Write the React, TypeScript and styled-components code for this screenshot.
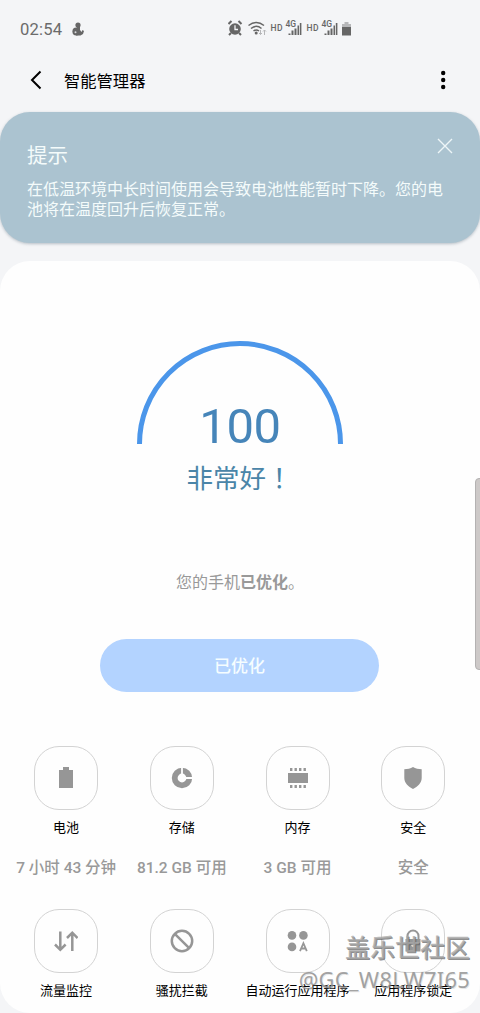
import React from 'react';
import styled, { createGlobalStyle } from 'styled-components';

const GlobalStyle = createGlobalStyle`
  * { box-sizing: border-box; }
  body {
    margin: 0;
    background: #f4f5f7;
    font-family: Roboto, "Noto Sans CJK SC", sans-serif;
    overflow: hidden;
  }
`;

const Screen = styled.main`
  position: relative;
  width: 480px;
  height: 1013px;
  display: flex;
  flex-direction: column;
  background: #f4f5f7;
  overflow: hidden;
`;

const StatusBar = styled.div`
  height: 58px;
  padding: 0 128px 0 20px;
  display: flex;
  align-items: center;
  color: #6b6b6b;
`;

const Clock = styled.span`
  font-size: 16.6px;
  line-height: 20px;
  width: 52px;
  padding-top: 2px;
  letter-spacing: 0.2px;
`;

const StatusIcons = styled.div`
  margin-left: auto;
  display: flex;
  align-items: center;
`;

const TopBar = styled.header`
  height: 54px;
  flex: none;
  padding: 0 30px 10px 28px;
  display: flex;
  align-items: center;
`;

const PageTitle = styled.h1`
  margin: 3px auto 0 20px;
  font-size: 16.3px;
  line-height: 24px;
  font-weight: 400;
  color: #000;
`;

const TipCard = styled.section`
  height: 131px;
  flex: none;
  padding: 32px 27px 0;
  border-radius: 30px;
  background: #abc3d0;
  box-shadow: 0 1px 3px rgba(90, 110, 125, 0.4);
  color: #f4fbfb;
`;

const TipHead = styled.div`
  display: flex;
  justify-content: space-between;
  height: 36px;
`;

const TipTitle = styled.h2`
  margin: 0;
  font-size: 20.5px;
  line-height: 24px;
  font-weight: 400;
`;

const CloseIcon = styled.svg`
  margin: -6px 0 0;
`;

const TipText = styled.p`
  margin: 0;
  width: 420px;
  font-size: 16px;
  line-height: 20px;
`;

const MainCard = styled.section`
  height: 752px;
  flex: none;
  margin-top: 18px;
  padding-top: 79px;
  display: flex;
  flex-direction: column;
  align-items: center;
  border-radius: 30px;
  background: #fefefe;
`;

const Gauge = styled.div`
  display: grid;
  justify-items: center;
  width: 208px;
  height: 105px;
  > * { grid-area: 1 / 1; }
`;

const Score = styled.div`
  align-self: end;
  font-size: 49px;
  line-height: 49px;
  height: 43px;
  letter-spacing: -0.3px;
  color: #4685b9;
`;

const Verdict = styled.div`
  height: 38px;
  flex: none;
  margin: 13px 1px 0 0;
  font-size: 26.5px;
  line-height: 38px;
  color: #4a85a8;
`;

const CenteredMark = styled.span`
  font-family: "Noto Sans CJK TC", sans-serif;
`;

const Summary = styled.p`
  margin: 75px 0 0;
  font-size: 16px;
  line-height: 24px;
  color: #999;
  b { font-weight: 700; }
`;

const OptimizeButton = styled.button`
  width: 279px;
  height: 53px;
  flex: none;
  margin: 44px 1px 0 0;
  padding: 1px 0 0;
  border: 0;
  border-radius: 27px;
  background: #b3d3ff;
  color: #f5fdff;
  font: 500 17px/52px Roboto, "Noto Sans CJK SC", sans-serif;
`;

const Tools = styled.div`
  display: grid;
  grid-template-columns: repeat(4, 115.7px);
  grid-template-rows: 163px 104px;
  margin: 54px 0.7px 0 0;
`;

const Tool = styled.div`
  display: flex;
  flex-direction: column;
  align-items: center;
  white-space: nowrap;
`;

const Tile = styled.div`
  width: 64px;
  height: 64px;
  flex: none;
  display: flex;
  align-items: center;
  justify-content: center;
  border: 1px solid #d3d3d3;
  border-radius: 25px;
  color: #969696;
`;

const ToolName = styled.span`
  margin-top: 7.5px;
  font-size: 13px;
  line-height: 20px;
  color: #000;
`;

const ToolValue = styled.span`
  margin-top: 19.5px;
  font-size: 15.5px;
  line-height: 22px;
  font-weight: 500;
  color: #999;
`;

const EdgeHandle = styled.div`
  position: absolute;
  top: 478px;
  right: -4px;
  width: 9px;
  height: 192px;
  border: 1px solid #b4b2b2;
  border-radius: 4px;
  background: #cdc9c8;
`;

const Watermark = styled.div`
  position: absolute;
  right: 10px;
  top: 932px;
  display: flex;
  flex-direction: column;
  align-items: flex-end;
  white-space: nowrap;
`;

const Community = styled.span`
  font-size: 25px;
  line-height: 34px;
  font-weight: 500;
  color: rgba(170, 170, 170, 0.8);
  text-shadow: 1px 1px 0 rgba(90, 90, 90, 0.7);
`;

const Handle = styled.span`
  margin-top: -1px;
  font: 400 21.8px/30px "Noto Sans", sans-serif;
  letter-spacing: 0.3px;
  color: rgba(140, 140, 140, 0.8);
  text-shadow: 1px 1px 0 rgba(160, 160, 160, 0.25);
`;

const icons = {
  battery: <path d="M9 1h6v3h4v18H5V4h4z" />,
  storage: (
    <g fill="none">
      <circle cx="12" cy="12" r="7.300" stroke="currentColor" strokeWidth="5.800" />
      <path d="M12 0v8M16 12h8" stroke="#fefefe" strokeWidth="1.800" />
    </g>
  ),
  memory: (
    <path d="M2 7h20v10H2zM4 2h2.400v3H4zM8.500 2h2.400v3H8.500zM13 2h2.400v3H13zM17.500 2h2.400v3h-2.400zM4 19h2.400v3H4zM8.500 19h2.400v3H8.500zM13 19h2.400v3H13zM17.500 19h2.400v3h-2.400z" />
  ),
  shield: <path d="M12 1c2.500 1.500 5.500 2.200 8.700 2.300V12c0 5-4 8.500-8.700 11-4.700-2.500-8.700-6-8.700-11V3.300C6.500 3.200 9.500 2.500 12 1z" />,
  traffic: (
    <path d="M6.300 2.500v18M1 15.500l5.300 5.300 5.300-5.300M18.300 22v-18M13 9l5.300-5.300L23.600 9" fill="none" stroke="currentColor" strokeWidth="2.500" />
  ),
  block: (
    <g fill="none" stroke="currentColor" strokeWidth="2.500">
      <circle cx="12" cy="12" r="10.200" />
      <path d="M4.800 4.800l14.400 14.400" />
    </g>
  ),
  autorun: (
    <g>
      <circle cx="6" cy="6.400" r="4.300" />
      <circle cx="17.400" cy="6.400" r="4.300" />
      <circle cx="6" cy="17.900" r="4.300" />
      <path d="M14 22.200l3.400-8 3.400 8M15.200 19.500h4.400" fill="none" stroke="currentColor" strokeWidth="1.800" />
    </g>
  ),
  lock: (
    <g>
      <path d="M4.500 10h15v12.500h-15z" />
      <path d="M6.500 11V7a5.500 5.500 0 0 1 11 0v4" fill="none" stroke="currentColor" strokeWidth="2" />
      <circle cx="12" cy="16" r="1.800" fill="#fff" />
    </g>
  ),
};

const tools: { icon: keyof typeof icons; name: string; value?: string }[] = [
  { icon: 'battery', name: '电池', value: '7 小时 43 分钟' },
  { icon: 'storage', name: '存储', value: '81.2 GB 可用' },
  { icon: 'memory', name: '内存', value: '3 GB 可用' },
  { icon: 'shield', name: '安全', value: '安全' },
  { icon: 'traffic', name: '流量监控' },
  { icon: 'block', name: '骚扰拦截' },
  { icon: 'autorun', name: '自动运行应用程序' },
  { icon: 'lock', name: '应用程序锁定' },
];

const StatusGroup = styled.svg`
  display: block;
  font-family: Roboto, sans-serif;
  font-weight: 500;
`;

const Signal = ({ x }: { x: number }) => (
  <g>
    <text x={x} y="14" fontSize="8.500" textLength="12">HD</text>
    <text x={x + 15} y="10" fontSize="8.500">4G</text>
    <path d={`M${x + 18} 16.500h2v1.500h-2zM${x + 21} 13.500h2V18h-2zM${x + 24} 11.500h2V18h-2zM${x + 27} 8.500h1.500V18H${x + 27}zM${x + 29.3} 6h1.600v12h-1.600z`} />
  </g>
);

export default function App() {
  return (
    <Screen>
      <GlobalStyle />
      <StatusBar>
        <Clock>02:54</Clock>
        <svg width="12" height="14" viewBox="0 0 12 14" fill="#666">
          <circle cx="6" cy="3" r="2.600" />
          <circle cx="4.300" cy="9.500" r="3.900" />
          <path d="M5 5h3v3l1.500 2 1-2 1.500 1-1 3-2.500 1.500H4z" />
          <circle cx="3.500" cy="10.200" r="1" fill="#d8d9db" />
        </svg>
        <StatusIcons>
          <StatusGroup width="124" height="24" viewBox="0 0 124 24" fill="#666">
            <circle cx="7" cy="12" r="5.800" />
            <path d="M.5 7l3-3M13.500 7l-3-3M3 16l-2 2M11 16l2 2" stroke="#666" strokeWidth="2" />
            <path d="M7 8.300V12.500h3" fill="none" stroke="#f4f5f7" strokeWidth="1.300" />
            <g fill="none" stroke="#666" strokeWidth="1.500">
              <path d="M20.500 8.500q8-6 15.500 0M23 11.500q5.300-4.300 10.500 0M25.500 14q2.800-2.200 5.500 0" />
            </g>
            <circle cx="28.200" cy="16" r="1.500" />
            <path d="M32.500 13v4.500m-1.500-1.500l1.500 1.500 1.500-1.500M36.500 18v-5m-1.500 1.500l1.500-1.500 1.500 1.500" fill="none" stroke="#b5b6b8" />
            <Signal x={42.5} />
            <Signal x={78.5} />
            <path d="M116.500 5h4v2h2.500v3h-9V7h2.500z" fill="#b7b8ba" />
            <path d="M114 10h9v8.500h-9z" />
          </StatusGroup>
        </StatusIcons>
      </StatusBar>
      <TopBar>
        <svg width="16" height="20" viewBox="0 0 16 20" fill="none" stroke="#000" strokeWidth="2">
          <path d="M12.500 1.500L4 10l8.500 8.500" />
        </svg>
        <PageTitle>智能管理器</PageTitle>
        <svg width="10" height="20" viewBox="0 0 10 20">
          <circle cx="3.200" cy="3" r="2.200" />
          <circle cx="3.200" cy="10" r="2.200" />
          <circle cx="3.200" cy="17" r="2.200" />
        </svg>
      </TopBar>
      <TipCard>
        <TipHead>
          <TipTitle>提示</TipTitle>
          <CloseIcon width="16" height="16" viewBox="0 0 16 16" fill="none" stroke="#eef6f8" strokeWidth="1.400">
            <path d="M1 1l14 14M15 1L1 15" />
          </CloseIcon>
        </TipHead>
        <TipText>在低温环境中长时间使用会导致电池性能暂时下降。您的电池将在温度回升后恢复正常。</TipText>
      </TipCard>
      <MainCard>
        <Gauge>
          <svg width="208" height="105" viewBox="0 0 208 105">
            <path d="M3.500 104a100.500 100.500 0 0 1 201 0" fill="none" stroke="#4b96ea" strokeWidth="5" />
          </svg>
          <Score>100</Score>
        </Gauge>
        <Verdict>非常好<CenteredMark lang="zh-TW">！</CenteredMark></Verdict>
        <Summary>您的手机<b>已优化</b>。</Summary>
        <OptimizeButton>已优化</OptimizeButton>
        <Tools>
          {tools.map((tool) => (
            <Tool key={tool.name}>
              <Tile>
                <svg width="24" height="24" viewBox="0 0 24 24" fill="currentColor">{icons[tool.icon]}</svg>
              </Tile>
              <ToolName>{tool.name}</ToolName>
              {tool.value && <ToolValue>{tool.value}</ToolValue>}
            </Tool>
          ))}
        </Tools>
      </MainCard>
      <EdgeHandle />
      <Watermark>
        <Community>盖乐世社区</Community>
        <Handle>@GC_W8LW7I65</Handle>
      </Watermark>
    </Screen>
  );
}
